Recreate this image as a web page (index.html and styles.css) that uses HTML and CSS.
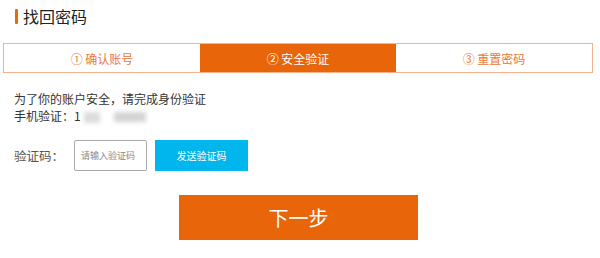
FILE: index.html
```html
<!DOCTYPE html>
<html lang="zh">
<head>
<meta charset="utf-8">
<link rel="stylesheet" href="styles.css">
</head>
<body>
<div class="page">
  <div class="title"><span class="bar"></span><span class="title-text">找回密码</span></div>
  <div class="steps">
    <div class="step">①&nbsp;确认账号</div>
    <div class="step active">②&nbsp;安全验证</div>
    <div class="step">③&nbsp;重置密码</div>
  </div>
  <div class="info">
    <div class="line">为了你的账户安全，请完成身份验证</div>
    <div class="line">手机验证：1<span class="blur"><span class="b1"></span><span class="b2"></span></span></div>
  </div>
  <div class="form-row">
    <span class="label">验证码：</span>
    <div class="input">请输入验证码</div>
    <div class="send">发送验证码</div>
  </div>
  <div class="next-wrap">
    <div class="next">下一步</div>
  </div>
</div>
</body>
</html>
```
FILE: styles.css
```css
html, body {
  margin: 0;
  padding: 0;
  background: #fff;
}
body {
  font-family: "Noto Sans CJK SC", "Noto Sans", sans-serif;
  color: #333;
}
.page {
  width: 600px;
  height: 258px;
  padding-top: 6px;
  box-sizing: border-box;
}
.title {
  display: flex;
  align-items: center;
  height: 20px;
  padding-left: 15px;
}
.bar {
  width: 3px;
  height: 15px;
  background: #e8690f;
  border-radius: 1px;
  margin-right: 5px;
}
.title-text {
  font-size: 16px;
  line-height: 20px;
  color: #222;
}
.steps {
  display: flex;
  margin: 17px 0 0 3px;
  width: 590px;
  height: 30px;
  border: 1px solid #f2b48e;
  box-sizing: border-box;
}
.step {
  flex: 1;
  display: flex;
  align-items: center;
  justify-content: center;
  font-size: 12px;
  color: #e9793a;
}
.step.active {
  background: #e8650a;
  color: #fff;
}
.info {
  margin: 17px 0 0 14px;
  font-size: 12px;
  line-height: 17px;
  color: #333;
}
.blur {
  display: inline-flex;
  vertical-align: middle;
  gap: 14px;
  margin-left: 3px;
  filter: blur(2px);
}
.b1 {
  width: 16px;
  height: 11px;
  background: #dcdcdc;
}
.b2 {
  width: 32px;
  height: 10px;
  background: #d4d4d4;
}
.form-row {
  display: flex;
  align-items: center;
  margin: 16px 0 0 14px;
  height: 31px;
}
.label {
  width: 60px;
  font-size: 12.5px;
  color: #555;
}
.input {
  width: 73px;
  height: 31px;
  box-sizing: border-box;
  border: 1px solid #a9a9a9;
  border-radius: 2px;
  font-size: 9px;
  color: #888;
  display: flex;
  align-items: center;
  padding-left: 6px;
}
.send {
  margin-left: 8px;
  width: 93px;
  height: 31px;
  background: #00b6ec;
  color: #fff;
  font-size: 10px;
  display: flex;
  align-items: center;
  justify-content: center;
}
.next-wrap {
  margin: 24px 0 0 179px;
}
.next {
  width: 239px;
  height: 45px;
  background: #e8650a;
  color: #fff;
  font-size: 20px;
  display: flex;
  align-items: center;
  justify-content: center;
}
```
